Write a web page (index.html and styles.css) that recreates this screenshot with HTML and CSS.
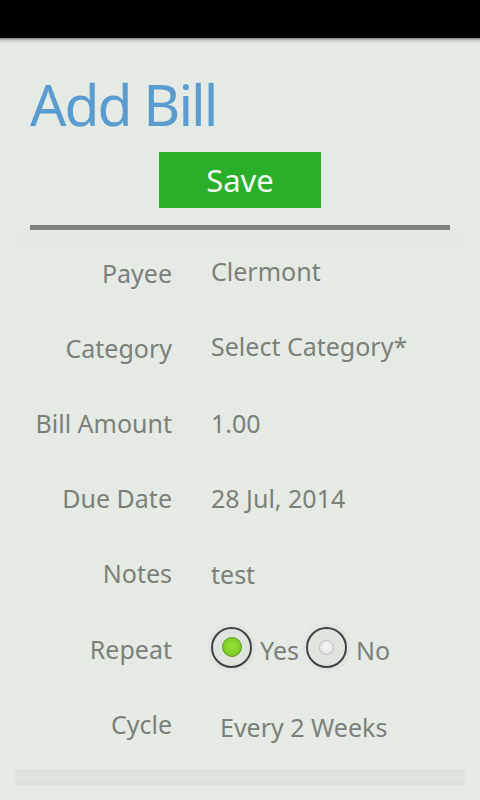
FILE: index.html
```html
<!DOCTYPE html>
<html>
<head>
<meta charset="utf-8">
<link rel="stylesheet" href="styles.css">
</head>
<body>
<div class="status"></div>
<div class="shadow"></div>
<main class="page">
  <h1 class="title">Add Bill</h1>
  <div class="save-wrap"><button class="save">Save</button></div>
  <div class="divider"></div>
  <section class="panel">
    <div class="form">
      <div class="label">Payee</div><div class="value up">Clermont</div>
      <div class="label">Category</div><div class="value up">Select Category*</div>
      <div class="label">Bill Amount</div><div class="value">1.00</div>
      <div class="label">Due Date</div><div class="value">28 Jul, 2014</div>
      <div class="label">Notes</div><div class="value down">test</div>
      <div class="label">Repeat</div>
      <div class="value radios">
        <span class="radio checked"><span class="dot"></span></span><span class="rlabel">Yes</span>
        <span class="radio"><span class="dot"></span></span><span class="rlabel">No</span>
      </div>
      <div class="label">Cycle</div><div class="value spinner">Every 2 Weeks</div>
    </div>
    <div class="bottom-bar"></div>
  </section>
</main>
</body>
</html>
```
FILE: styles.css
```css
html, body {
  margin: 0;
  padding: 0;
  background: #e5eae4;
  font-family: "Noto Sans", "Open Sans", sans-serif;
  width: 480px;
  height: 800px;
  overflow: hidden;
}
.status {
  height: 38px;
  background: #000;
}
.shadow {
  height: 6px;
  background: linear-gradient(#7d827c, #c9cec8 40%, #e5eae4);
}
.page {
  display: flex;
  flex-direction: column;
}
.title {
  margin: 28px 0 0 30px;
  font-weight: normal;
  font-size: 57px;
  letter-spacing: -2px;
  line-height: 64px;
  color: #5a9ccf;
}
.save-wrap {
  display: flex;
  justify-content: center;
  margin-top: 16px;
}
.save {
  width: 162px;
  height: 56px;
  border: none;
  background: #2aaf2a;
  color: #f2fbf2;
  font-family: "Noto Sans", sans-serif;
  font-size: 31px;
  padding: 0;
}
.divider {
  margin: 17px 30px 0;
  height: 5px;
  background: #7f847e;
}
.panel {
  margin: 2px 15px 0;
  display: flex;
  flex-direction: column;
  background:
    linear-gradient(#e1e6e0, #e5eae4 18px);
}
.form {
  display: grid;
  grid-template-columns: 157px 1fr;
  column-gap: 39px;
  row-gap: 43px;
  color: #7b807a;
  font-size: 25px;
  padding-top: 25px;
}
.label {
  text-align: right;
  height: 32px;
  line-height: 32px;
}
.value {
  height: 32px;
  line-height: 32px;
}
.value.up { margin-top: -2px; }
.value.down { margin-top: 1px; }
.radios {
  display: flex;
  align-items: center;
  margin-top: -2px;
}
.radio {
  flex: none;
  width: 51px;
  height: 51px;
  margin-left: -5px;
  border-radius: 50%;
  background: radial-gradient(circle, #dfe4de 62%, #e5eae4 72%);
  display: flex;
  align-items: center;
  justify-content: center;
  position: relative;
}
.radio + .rlabel + .radio {
  margin-left: 2px;
}
.radio::before {
  content: "";
  position: absolute;
  inset: 5px;
  border: 2px solid #3f433f;
  border-radius: 50%;
}
.radio .dot {
  width: 13px;
  height: 13px;
  border-radius: 50%;
  background: radial-gradient(circle at 50% 40%, #f6f8f5, #dde1dc);
  border: 1px solid #bcc1bb;
}
.radio.checked .dot {
  width: 18px;
  height: 18px;
  background: radial-gradient(circle at 50% 45%, #9be23a, #6fc21b);
  border: 1px solid #5c9a25;
}
.rlabel {
  margin-left: 3px;
  margin-top: 6px;
}
.radio + .rlabel + .radio + .rlabel {
  margin-left: 4px;
}
.spinner {
  margin-left: 9px;
  margin-top: 3px;
}
.bottom-bar {
  margin-top: 26px;
  height: 16px;
  background: linear-gradient(#dde2dc 0 8px, #e5eae4 8px 9px, #dde2dc 9px);
}
```
